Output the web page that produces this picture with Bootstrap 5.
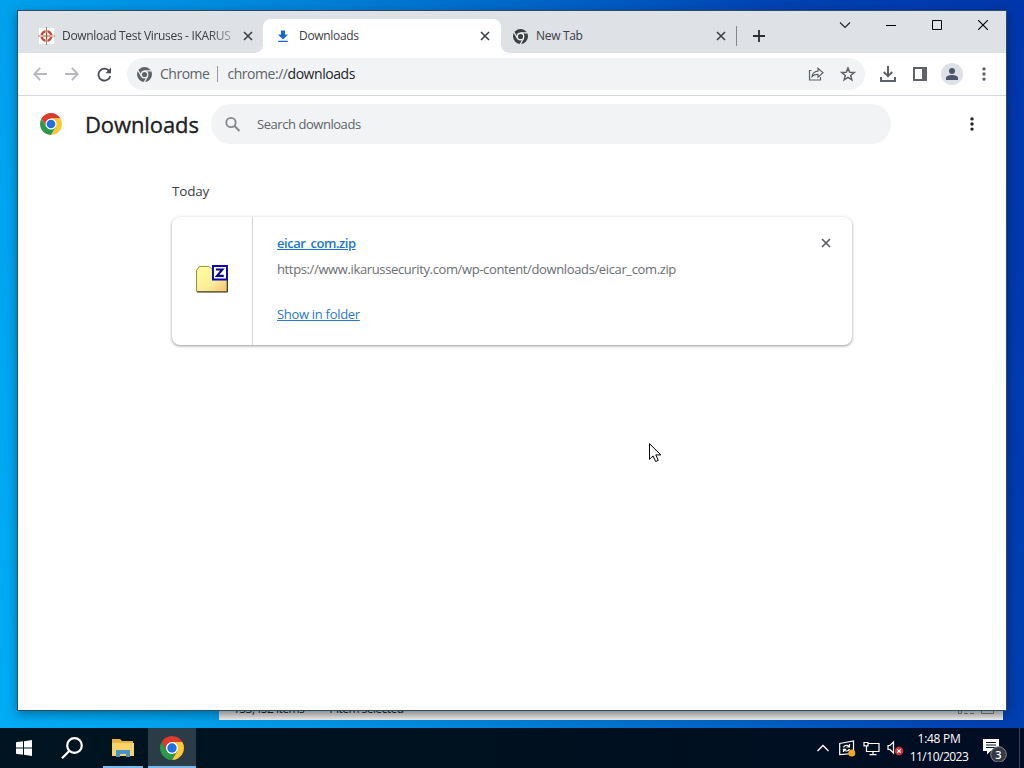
<!DOCTYPE html>
<html lang="en">
<head>
    <meta charset="UTF-8">
    <meta name="viewport" content="width=device-width, initial-scale=1.0">
    <title>Downloads</title>
    <link href="https://cdn.jsdelivr.net/npm/bootstrap@5.3.2/dist/css/bootstrap.min.css" rel="stylesheet">
    <style>
        :root {
            --strip-bg: #dee1e6;
            --field-bg: #f1f3f4;
            --icon-color: #5f6368;
            --link-color: #2b76d2;
        }

        body {
            font-family: "Open Sans", "Noto Sans", sans-serif;
            font-size: 12px;
            line-height: 1.3;
            color: #3c4043;
        }

        svg {
            display: block;
            flex: none;
        }

        /* Desktop */
        .desktop {
            width: 1024px;
            height: 768px;
            background: linear-gradient(76deg, #00adf5 0%, #009fec 18%, #0084d8 40%, #0062c4 62%, #0042b2 80%, #0036ac 100%);
        }

        .explorer-window {
            left: 219px;
            top: 620px;
            width: 784px;
            height: 100px;
            padding: 0 8px 3px 14px;
            background: linear-gradient(#c0c0c0 90%, #c4c4c4 91%, #ececec 99%);
            color: #222;
            font-size: 12px;
            line-height: 16px;
            letter-spacing: -0.55px;
        }

        .selected-count { margin-left: 23px; }

        .browser-window {
            left: 17px;
            top: 10px;
            width: 990px;
            height: 701px;
            border: 1px solid #2d4a66;
            box-shadow: 0 3px 10px rgba(0, 0, 0, 0.35);
        }

        /* Tabs */
        .tab-strip {
            height: 42px;
            background-color: var(--strip-bg);
        }

        .browser-tab {
            height: 34px;
            padding: 0 10px 0 20px;
        }

        .browser-tab.current {
            position: relative;
            width: 238px;
            padding-left: 12px;
            padding-right: 7px;
            background-color: #fff;
            border-radius: 8px 8px 0 0;
        }

        .browser-tab.current::before,
        .browser-tab.current::after {
            content: "";
            position: absolute;
            bottom: 0;
            width: 8px;
            height: 8px;
        }

        .browser-tab.current::before {
            left: -8px;
            background: radial-gradient(circle at 0 0, transparent 7.5px, #fff 8px);
        }

        .browser-tab.current::after {
            right: -8px;
            background: radial-gradient(circle at 100% 0, transparent 7.5px, #fff 8px);
        }

        .tab-first { width: 245px; }
        .tab-last { width: 235px; }
        .tab-last.browser-tab { padding-left: 12px; padding-right: 6px; }

        .tab-label {
            margin-left: 7px;
            white-space: nowrap;
            letter-spacing: -0.32px;
        }

        .tab-first .tab-label {
            width: 171px;
            -webkit-mask-image: linear-gradient(90deg, #000 86%, rgba(0, 0, 0, 0.3) 100%);
            mask-image: linear-gradient(90deg, #000 86%, rgba(0, 0, 0, 0.3) 100%);
        }

        .strip-divider {
            width: 1px;
            height: 20px;
            background-color: #85888c;
        }

        .caption-btn {
            width: 46px;
            height: 28px;
        }

        /* Toolbar */
        .toolbar {
            height: 43px;
            padding: 0 6px;
            border-bottom: 1px solid #d5d8dc;
            color: var(--icon-color);
        }

        .tool-btn {
            width: 32px;
            height: 32px;
        }

        .address-bar {
            height: 32px;
            margin: 0 7px;
            padding: 0 9px 0 10px;
            border-radius: 16px;
            background-color: var(--field-bg);
            font-size: 14px;
            letter-spacing: -0.45px;
        }

        .address-chip {
            margin-left: 8px;
            letter-spacing: -0.5px;
        }

        .address-divider {
            width: 1px;
            height: 16px;
            background-color: #9a9da1;
        }

        .address-url { margin-left: 1px; }

        .avatar {
            width: 22px;
            height: 22px;
            background-color: var(--strip-bg);
        }

        /* Downloads page */
        .page-header {
            height: 56px;
            padding-left: 22px;
        }

        .page-title {
            width: 126px;
            margin: 0 0 0 23px;
            font-size: 22px;
            font-weight: 500;
            letter-spacing: -0.1px;
            -webkit-text-stroke: 0.35px #202124;
            color: #202124;
        }

        .search-field {
            width: 680px;
            height: 40px;
            padding-left: 13px;
            border-radius: 20px;
            background-color: var(--field-bg);
            font-size: 13px;
            letter-spacing: -0.45px;
            color: var(--icon-color);
        }

        .page-menu { margin-right: 32px; }

        .download-list {
            width: 680px;
            margin: 30px 0 0 154px;
        }

        .date-label {
            font-size: 13.5px;
            line-height: 18px;
            margin-bottom: 17px;
            letter-spacing: -0.2px;
        }

        .download-item {
            height: 128px;
            border: 0;
            border-radius: 8px;
            font-size: 13px;
            line-height: 20px;
            box-shadow: 0 1px 3px 1px rgba(60, 64, 67, 0.18), 0 1px 2px rgba(60, 64, 67, 0.32);
        }

        .file-icon {
            width: 81px;
            padding-bottom: 4px;
            border-right: 1px solid #d2d2d2;
        }

        .file-details {
            padding: 16px 0 0 24px;
        }

        .file-details a {
            color: var(--link-color);
        }

        .file-name {
            font-weight: 600;
            letter-spacing: -0.46px;
        }

        .file-name a { color: #1b74d0; }

        .file-url {
            color: #6a6e72;
            margin: 6px 0 25px;
            letter-spacing: -0.37px;
        }

        .file-action { letter-spacing: -0.3px; }
        .file-remove { margin: 21px 21px 0 0; color: #55585c; }

        .cursor-arrow {
            left: 649px;
            top: 443px;
        }

        /* Taskbar */
        .taskbar {
            left: 0;
            top: 728px;
            width: 1024px;
            height: 40px;
            background: linear-gradient(90deg, #001521, #00101e 50%, #000d24);
            color: #fff;
        }

        .task-btn {
            width: 48px;
            height: 40px;
        }

        .task-explorer {
            width: 40px;
            margin: 0 5px 0 7px;
            border-bottom: 2px solid #76b9ed;
            padding-top: 2px;
        }

        .task-chrome {
            background-color: #2b3c48;
            border-bottom: 2px solid #76b9ed;
            padding-top: 2px;
        }

        .tray-btn { width: 24px; height: 40px; }

        .clock {
            width: 64px;
            margin-right: 10px;
            line-height: 18px;
            letter-spacing: -0.3px;
        }

        .clock-date { letter-spacing: -0.5px; }

        .peek {
            width: 5px;
            height: 40px;
            margin-left: 10px;
            border-left: 1px solid #3a4658;
        }
    </style>
</head>
<body class="overflow-hidden">
<svg width="0" height="0" class="position-absolute">
    <symbol id="chrome-color" viewBox="2 2 44 44">
        <path fill="#dc3b2e" d="M24 13H43.05A22 22 0 0 0 4.95 13L14.47 29.5 24 24z"/>
        <path fill="#fcc934" d="M24 13H43.05A22 22 0 0 1 24 46L33.53 29.5 24 24z"/>
        <path fill="#2b9a48" d="M4.95 13A22 22 0 0 0 24 46L33.53 29.5 24 24 14.47 29.5z"/>
        <circle cx="24" cy="24" r="11" fill="#fff"/>
        <circle cx="24" cy="24" r="8.6" fill="#1f70e0"/>
    </symbol>
    <symbol id="chrome-mono" viewBox="2 2 44 44">
        <circle cx="24" cy="24" r="22" fill="currentColor"/>
        <path d="M24 13.5H44M14.9 29.3L4.9 12M33.1 29.3L23 47" stroke="#eceef1" stroke-width="3.5"/>
        <circle cx="24" cy="24" r="9.5" fill="currentColor" stroke="#eceef1" stroke-width="4"/>
    </symbol>
    <symbol id="close" viewBox="0 0 10 10">
        <path d="M1 1L9 9M9 1L1 9" stroke="currentColor" stroke-width="1.6"/>
    </symbol>
    <symbol id="dots" viewBox="0 0 4 16">
        <circle cx="2" cy="2.9" r="1.7" fill="currentColor"/>
        <circle cx="2" cy="8" r="1.7" fill="currentColor"/>
        <circle cx="2" cy="13.1" r="1.7" fill="currentColor"/>
    </symbol>
</svg>

<div class="desktop position-relative overflow-hidden">
    <div class="explorer-window position-absolute d-flex align-items-end">
        <span>153,452 items</span>
        <span class="selected-count">1 item selected</span>
        <svg class="ms-auto" width="38" height="16" fill="none" stroke="#777">
            <path d="M1.5 6v6.500h3V6M7 9.500h4M13 9.500h4M7 12.500h4M13 12.500h4M24.500 3v9.500h12V3"/>
        </svg>
    </div>

    <div class="browser-window position-absolute bg-white d-flex flex-column">
        <div class="tab-strip d-flex align-items-end">
            <div class="browser-tab tab-first d-flex align-items-center">
                <svg width="17" height="18" viewBox="0 0 17 18">
                    <path fill="#fff" d="M1 1h15v16H1z"/>
                    <circle cx="8.5" cy="9" r="4.8" fill="none" stroke="#bd4a35" stroke-width="2.6"/>
                    <path d="M8.5 2v14M2 9h13" stroke="#fff" stroke-width="1.8"/>
                    <path d="M8.5 0v6.5M8.5 11.5v6.5M0 9h6M11 9h6" stroke="#b8523f" stroke-width=".8"/>
                    <path d="M8.5 6v6M5.5 9h6" stroke="#bd4a35" stroke-width="1.2"/>
                </svg>
                <span class="tab-label">Download Test Viruses - IKARUS</span>
                <svg class="ms-auto" width="10" height="10"><use href="#close"/></svg>
            </div>
            <div class="browser-tab current d-flex align-items-center">
                <svg width="16" height="16" viewBox="0 0 16 16" fill="#1967d2">
                    <path d="M6 2.5h4v4h3L8 11.5 3 6.5h3zM3.2 12.7h9.6v1.4H3.2z"/>
                </svg>
                <span class="tab-label ms-2">Downloads</span>
                <svg class="ms-auto me-1" width="10" height="10"><use href="#close"/></svg>
            </div>
            <div class="browser-tab tab-last d-flex align-items-center">
                <svg width="15" height="15"><use href="#chrome-mono"/></svg>
                <span class="tab-label ms-2">New Tab</span>
                <svg class="ms-auto me-1" width="10" height="10"><use href="#close"/></svg>
            </div>
            <div class="d-flex align-items-center browser-tab p-0">
                <div class="strip-divider"></div>
                <svg class="ms-3" width="12" height="12"><path d="M6 0v12M0 6h12" stroke="#2b2e31" stroke-width="1.8"/></svg>
            </div>
            <div class="d-flex ms-auto align-self-start">
                <div class="caption-btn d-flex align-items-center justify-content-center">
                    <svg width="12" height="8"><path d="M1 1.5L6 6.5 11 1.5" fill="none" stroke="#222" stroke-width="1.1"/></svg>
                </div>
                <div class="caption-btn d-flex align-items-center justify-content-center">
                    <svg width="10" height="2"><path d="M0 1.5h10" stroke="#000"/></svg>
                </div>
                <div class="caption-btn d-flex align-items-center justify-content-center">
                    <svg width="10" height="10"><path d="M.5 .5h9v9h-9z" fill="none" stroke="#000"/></svg>
                </div>
                <div class="caption-btn d-flex align-items-center justify-content-center">
                    <svg width="10" height="10"><path d="M0 0l10 10M10 0L0 10" stroke="#000" stroke-width="1.1"/></svg>
                </div>
            </div>
        </div>

        <div class="toolbar d-flex align-items-center">
            <div class="tool-btn d-flex align-items-center justify-content-center">
                <svg width="14" height="14" fill="none" stroke="#b5b7ba" stroke-width="1.8"><path d="M14 7H1.5M7.2 .8L1.2 7l6 6.2"/></svg>
            </div>
            <div class="tool-btn d-flex align-items-center justify-content-center">
                <svg width="14" height="14" fill="none" stroke="#b5b7ba" stroke-width="1.8"><path d="M0 7h12.5M6.8 .8l6 6.2-6 6.2"/></svg>
            </div>
            <div class="tool-btn d-flex align-items-center justify-content-center">
                <svg width="15" height="15" viewBox="0 0 15 15"><path d="M12.5 4.3A6 6 0 1 0 13.3 9" fill="none" stroke="#4a4d51" stroke-width="1.8"/><path d="M14 .6v5.6H8.4z" fill="#4a4d51"/></svg>
            </div>
            <div class="address-bar d-flex align-items-center flex-grow-1">
                <svg width="15" height="15"><use href="#chrome-mono"/></svg>
                <span class="address-chip">Chrome</span>
                <div class="address-divider mx-2"></div>
                <span class="address-url">chrome://<span class="text-dark">downloads</span></span>
                <svg class="ms-auto" width="16" height="16" viewBox="0 0 16 16" fill="none" stroke="#5f6368" stroke-width="1.2">
                    <path d="M3.5 4.5h-2v9.5h11v-3"/>
                    <path d="M4 10.5c.6-3.5 2.5-5.2 6-5.4V2.3L15 6.8l-5 4.3V8.4C7.3 8.4 5.5 9 4 10.5z"/>
                </svg>
                <svg class="ms-3" width="16" height="16" viewBox="0 0 16 16" fill="none" stroke="#5f6368" stroke-width="1.5">
                    <path d="M8 2l1.7 4.2 4.5.3-3.5 2.9 1.15 4.4L8 11.4l-3.85 2.4L5.3 9.4 1.8 6.5l4.5-.3z"/>
                </svg>
            </div>
            <div class="tool-btn d-flex align-items-center justify-content-center">
                <svg width="16" height="16" fill="none" stroke="#5f6368" stroke-width="2"><path d="M8 0v10M3.8 6L8 10.2 12.2 6M1 11v4h14v-4"/></svg>
            </div>
            <div class="tool-btn d-flex align-items-center justify-content-center">
                <svg width="14" height="14"><path d="M1 1h12v12H1z" fill="none" stroke="#5f6368" stroke-width="2"/><path d="M9 1h4v12H9z" fill="#5f6368"/></svg>
            </div>
            <div class="tool-btn d-flex align-items-center justify-content-center">
                <div class="avatar rounded-circle d-flex align-items-center justify-content-center">
                    <svg width="12" height="12" fill="#4d5769"><circle cx="6" cy="3" r="3"/><path d="M0 12V10c0-2 3-3 6-3s6 1 6 3v2z"/></svg>
                </div>
            </div>
            <div class="tool-btn d-flex align-items-center justify-content-center">
                <svg width="4" height="16"><use href="#dots"/></svg>
            </div>
        </div>

        <div class="page-header d-flex align-items-center">
            <svg width="22" height="22"><use href="#chrome-color"/></svg>
            <h1 class="page-title">Downloads</h1>
            <div class="search-field d-flex align-items-center">
                <svg width="17" height="17" fill="none" stroke="#85888c"><circle cx="7" cy="6.5" r="4.7" stroke-width="1.8"/><path d="M10.3 9.8l5.2 5.2" stroke-width="2"/></svg>
                <span class="ms-3">Search downloads</span>
            </div>
            <svg class="ms-auto text-dark page-menu" width="4" height="16"><use href="#dots"/></svg>
        </div>

        <div class="download-list">
            <div class="date-label"><span>Today</span></div>
            <div class="card download-item flex-row">
                <div class="file-icon d-flex align-items-center justify-content-center">
                    <svg width="32" height="28" viewBox="0 0 33 29">
                        <defs>
                            <linearGradient id="folder" x1="0" y1="0" x2="1" y2="1">
                                <stop offset="0" stop-color="#fffda0"/>
                                <stop offset=".6" stop-color="#fbee9a"/>
                                <stop offset="1" stop-color="#f6bd78"/>
                            </linearGradient>
                        </defs>
                        <path d="M.5 5.5l3-4h10l3 3h15.500v23H.5z" fill="url(#folder)" stroke="#8e8c40"/>
                        <path d="M1 28h31.500V5" fill="none" stroke="#3a3410"/>
                        <path d="M17.5 1h14.500v14H17.500z" fill="#fff" stroke="#0a0ab0" stroke-width="2"/>
                        <path d="M20.500 4.700h6.800L21.700 11.300h7" fill="none" stroke="#0a0a8c" stroke-width="2.2"/>
                    </svg>
                </div>
                <div class="file-details flex-grow-1">
                    <div class="file-name"><a href="#">eicar_com.zip</a></div>
                    <div class="file-url"><span>https://www.ikarussecurity.com/wp-content/downloads/eicar_com.zip</span></div>
                    <div class="file-action"><a href="#">Show in folder</a></div>
                </div>
                <svg class="file-remove" width="10" height="10"><use href="#close"/></svg>
            </div>
        </div>
    </div>

    <svg class="cursor-arrow position-absolute" width="13" height="20" viewBox="0 0 13 20">
        <path d="M.5 .7v15.6l3.6-3.4 2.5 5.6 2.7-1.1-2.5-5.5h5z" fill="#fff" stroke="#000"/>
    </svg>

    <div class="taskbar position-absolute d-flex align-items-center">
        <div class="task-btn d-flex align-items-center justify-content-center">
            <svg width="16" height="16" fill="#fff"><path d="M0 2.300L7 1.300V7.500H0zM8 1.200L16 0V7.500H8zM0 8.500h7v6.200l-7-1zM8 8.500h8V16l-8-1.200z"/></svg>
        </div>
        <div class="task-btn d-flex align-items-center justify-content-center">
            <svg width="22" height="22" fill="none" stroke="#fff" stroke-width="2.2"><circle cx="13.5" cy="8.5" r="7.3"/><path d="M8.2 14L1 21.2"/></svg>
        </div>
        <div class="task-btn task-explorer d-flex align-items-center justify-content-center">
            <svg width="22" height="18">
                <path d="M0 0h8l2 2h11v15H0z" fill="#e8b440"/>
                <path d="M0 4h22v13H0z" fill="#f8d56c"/>
                <path d="M4 18v-7h14v7h-4v-3H8v3z" fill="#4a93c4"/>
            </svg>
        </div>
        <div class="task-btn task-chrome d-flex align-items-center justify-content-center">
            <svg width="24" height="24"><use href="#chrome-color"/></svg>
        </div>

        <div class="tray d-flex align-items-center ms-auto">
            <div class="tray-btn d-flex align-items-center justify-content-center">
                <svg width="12" height="8" fill="none" stroke="#fff" stroke-width="1.3"><path d="M.5 7L6 1.5 11.5 7"/></svg>
            </div>
            <div class="tray-btn d-flex align-items-center justify-content-center">
                <svg width="17" height="17" fill="none" stroke="#fff" stroke-width="1.2">
                    <path d="M.7 3.5L14.5 1v12.5L.7 14.5z"/>
                    <path d="M4.500 7.500c.8-2.500 4-3 5.500-1M10.500 4v3h-3M10.500 9c-.8 2.300-4 2.700-5.500.8M4.500 12V9.300h2.700"/>
                    <circle cx="12.8" cy="13" r="3.5" fill="#f5a623" stroke="none"/>
                </svg>
            </div>
            <div class="tray-btn d-flex align-items-center justify-content-center">
                <svg width="17" height="15" fill="none" stroke="#fff" stroke-width="1.2">
                    <path d="M5 2.500h11v8H3.500V5M10 10.500v3M6.500 13.700h7"/><path d="M1 1.500h4v3.300H1z"/>
                </svg>
            </div>
            <div class="tray-btn d-flex align-items-center justify-content-center">
                <svg width="17" height="16" fill="none" stroke="#fff" stroke-width="1.2">
                    <path d="M1 5.500h2L6.500 2v11L3 9.500H1z"/>
                    <circle cx="12" cy="11" r="4.3" fill="#d13438" stroke="none"/>
                    <path d="M10.300 9.300l3.400 3.400M13.700 9.300l-3.400 3.400"/>
                </svg>
            </div>
            <div class="clock text-center"><span>1:48 PM</span><br><span class="clock-date">11/10/2023</span></div>
            <svg class="notice" width="28" height="28" viewBox="0 0 28 28">
                <path d="M2 5h16v12H9.500L6 20.500V17H2z" fill="#fff"/>
                <path d="M5 8.500h10M5 11h10M5 13.500h10" stroke="#001025"/>
                <circle cx="17.500" cy="20.500" r="7.800" fill="#343a44" stroke="#8b8f96"/>
                <text x="17.500" y="24.500" text-anchor="middle" font-size="11" font-weight="600" fill="#fff">3</text>
            </svg>
            <div class="peek"></div>
        </div>
    </div>
</div>

<script src="https://cdn.jsdelivr.net/npm/bootstrap@5.3.2/dist/js/bootstrap.bundle.min.js"></script>
</body>
</html>
